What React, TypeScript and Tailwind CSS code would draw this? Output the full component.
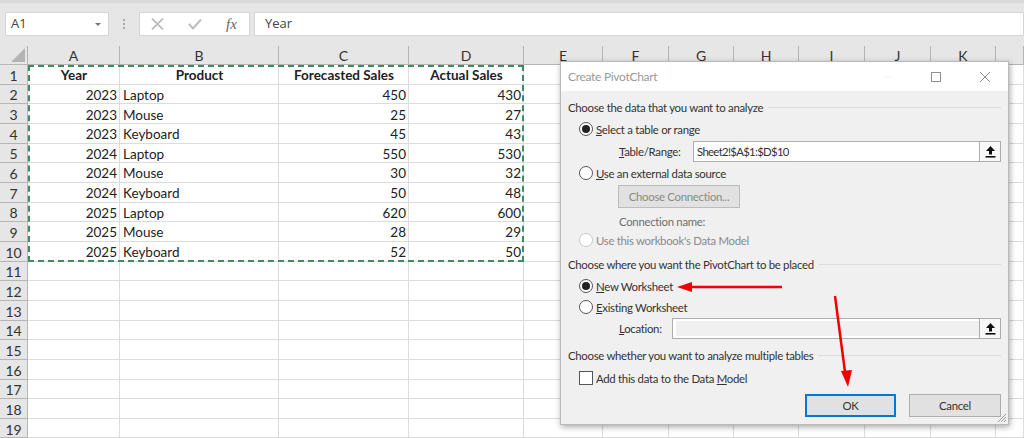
import { Minus } from 'lucide-react'

const columns = ['A', 'B', 'C', 'D', 'E', 'F', 'G', 'H', 'I', 'J', 'K', '']

const data = [
  ['2023', 'Laptop', '450', '430'],
  ['2023', 'Mouse', '25', '27'],
  ['2023', 'Keyboard', '45', '43'],
  ['2024', 'Laptop', '550', '530'],
  ['2024', 'Mouse', '30', '32'],
  ['2024', 'Keyboard', '50', '48'],
  ['2025', 'Laptop', '620', '600'],
  ['2025', 'Mouse', '28', '29'],
  ['2025', 'Keyboard', '52', '50'],
]

const headers = ['Year', 'Product', 'Forecasted Sales', 'Actual Sales']

function Cell({ text = '', align = 'left', bold = false }: { text?: string; align?: string; bold?: boolean }) {
  const alignClass = align === 'right' ? 'justify-end' : align === 'center' ? 'justify-center' : 'justify-start'
  return (
    <div className={`flex items-center overflow-visible whitespace-nowrap border-r border-b border-[#dcdcdc] bg-white pt-[2px] pr-[2px] pl-[3px] text-[13.5px] text-[#222] ${alignClass} ${bold ? 'font-bold' : ''}`}>
      {text}
    </div>
  )
}

function Sheet() {
  const rows = Array.from({ length: 19 }, (_, i) => i + 1)
  return (
    <div className="grid grid-cols-[28px_92px_159px_130px_115px_79px_66px_65px_65px_66px_66px_65px_28px] grid-rows-[19px_repeat(19,19.67px)] font-['Lato',sans-serif]">
      <div className="relative border-r border-b border-[#b5b5b5] bg-[#e6e6e6]">
        <svg className="absolute right-[2px] bottom-[2px]" width="14" height="14" viewBox="0 0 14 14">
          <polygon points="14,0 14,14 0,14" fill="#b4b4b4" />
        </svg>
      </div>
      {columns.map((c, i) => (
        <div key={i} className="flex items-center justify-center border-r border-b border-[#b5b5b5] bg-[#e6e6e6] pt-[1px] text-[14px] text-[#333]">
          {c}
        </div>
      ))}
      {rows.map((r) => (
        <div key={r} className="contents">
          <div className="flex items-center justify-center border-r border-b border-[#b5b5b5] bg-[#e6e6e6] pt-[2px] text-[14px] text-[#333]">
            {r}
          </div>
          {r === 1 && headers.map((h) => <Cell key={h} text={h} align="center" bold />)}
          {r > 1 && r <= 10 && (
            <>
              <Cell text={data[r - 2][0]} align="right" />
              <Cell text={data[r - 2][1]} />
              <Cell text={data[r - 2][2]} align="right" />
              <Cell text={data[r - 2][3]} align="right" />
            </>
          )}
          {r > 10 && [0, 1, 2, 3].map((i) => <Cell key={i} />)}
          {[0, 1, 2, 3, 4, 5, 6, 7].map((i) => <Cell key={`x${i}`} />)}
        </div>
      ))}
    </div>
  )
}

function Radio({ checked = false, disabled = false }: { checked?: boolean; disabled?: boolean }) {
  return (
    <span className={`flex h-[14px] w-[14px] shrink-0 items-center justify-center rounded-full border bg-white ${disabled ? 'border-[#c8c8c8]' : 'border-[#555]'}`}>
      {checked && <span className="h-[8px] w-[8px] rounded-full bg-[#222]" />}
    </span>
  )
}

function RadioRow({ className, checked, disabled, children }: { className: string; checked?: boolean; disabled?: boolean; children: React.ReactNode }) {
  return (
    <div className={`flex h-[18px] items-center gap-[3px] pl-[11px] ${disabled ? 'text-[#8a8a8a]' : ''} ${className}`}>
      <Radio checked={checked} disabled={disabled} />
      <span className="pt-[1px]">{children}</span>
    </div>
  )
}

function Heading({ className, children }: { className: string; children: string }) {
  return (
    <div className={`flex h-[18px] items-center gap-[5px] ${className}`}>
      <span className="whitespace-nowrap pt-[1px]">{children}</span>
      <div className="h-px flex-1 bg-[#dcdcdc]" />
    </div>
  )
}

function UploadButton() {
  return (
    <div className="flex h-full w-[21px] items-center justify-center border-l border-[#adadad] bg-[#f8f8f8]">
      <svg width="11" height="12" viewBox="0 0 11 12">
        <path d="M5.5 0 L10 5 H7 V8.5 H4 V5 H1 Z" fill="#111" />
        <rect x="0.5" y="10" width="10" height="1.6" fill="#111" />
      </svg>
    </div>
  )
}

function Dialog() {
  return (
    <div className="absolute top-[61px] left-[560px] flex h-[364px] w-[449px] flex-col border border-[#b9b9b9] bg-[#f0f0f0] font-['Lato',sans-serif] text-[11.4px] tracking-[-0.3px] text-[#333] shadow-[1px_2px_6px_rgba(0,0,0,0.35)]">
      <div className="flex h-[29px] shrink-0 items-center bg-white pl-[7px] text-[12px] text-[#9a9a9a]">
        <span className="pt-[1px]">Create PivotChart</span>
        <div className="ml-auto flex items-center">
          <Minus size={12} strokeWidth={1} className="mr-[36px] text-[#e4e4e4]" />
          <div className="mr-[39px] h-[10px] w-[10px] border border-[#8f8f8f]" />
          <svg className="mr-[18px]" width="10" height="10" viewBox="0 0 10 10">
            <path d="M0 0 L10 10 M10 0 L0 10" stroke="#8f8f8f" strokeWidth="1" />
          </svg>
        </div>
      </div>
      <div className="flex flex-1 flex-col pr-[7px] pl-[7px]">
        <Heading className="mt-[7px]">Choose the data that you want to analyze</Heading>
        <RadioRow className="mt-[4px]" checked><u>S</u>elect a table or range</RadioRow>
        <div className="mt-[3px] flex h-[21px] items-center">
          <span className="ml-[51px] w-[74px] pt-[1px]"><u>T</u>able/Range:</span>
          <div className="flex h-full flex-1 items-center border border-[#adadad] bg-white">
            <span className="flex-1 pt-[1px] pl-[3px] tracking-[-0.7px]">Sheet2!$A$1:$D$10</span>
            <UploadButton />
          </div>
        </div>
        <RadioRow className="mt-[2px]"><u>U</u>se an external data source</RadioRow>
        <div className="mt-[3px] ml-[50px] flex h-[23px] w-[122px] items-center justify-center border border-[#bcbcbc] bg-[#e1e1e1] pt-[1px] text-[#8a8a8a]">
          Choose Connection...
        </div>
        <div className="mt-[4px] ml-[51px] flex h-[18px] items-center pt-[1px] text-[#6e6e6e]">Connection name:</div>
        <RadioRow className="mt-[1px]" disabled>Use this workbook's Data Model</RadioRow>
        <Heading className="mt-[6px]">Choose where you want the PivotChart to be placed</Heading>
        <RadioRow className="mt-[4px]" checked><u>N</u>ew Worksheet</RadioRow>
        <RadioRow className="mt-[3px]"><u>E</u>xisting Worksheet</RadioRow>
        <div className="mt-[2px] flex h-[21px] items-center">
          <span className="ml-[51px] w-[53px] pt-[1px]"><u>L</u>ocation:</span>
          <div className="flex h-full flex-1 items-center border border-[#adadad] bg-white pl-[3px]">
            <div className="h-[15px] flex-1 bg-[#f0f0f0]" />
            <UploadButton />
          </div>
        </div>
        <Heading className="mt-[7px]">Choose whether you want to analyze multiple tables</Heading>
        <div className="mt-[5px] flex h-[18px] items-center gap-[3px] pl-[11px]">
          <span className="h-[14px] w-[14px] border border-[#555] bg-white" />
          <span className="pt-[1px]">Add this data to the Data <u>M</u>odel</span>
        </div>
        <div className="mt-[7px] flex h-[23px] justify-end gap-[13px]">
          <div className="flex w-[91px] items-center justify-center border-2 border-[#0078d7] bg-[#e1e1e1] pt-[1px]">OK</div>
          <div className="flex w-[92px] items-center justify-center border border-[#adadad] bg-[#e1e1e1] pt-[1px]">Cancel</div>
        </div>
      </div>
      <svg className="absolute right-[1px] bottom-[1px]" width="10" height="10" viewBox="0 0 10 10">
        <path d="M9 1 L1 9 M9 4 L4 9 M9 7 L7 9" stroke="#9a9a9a" strokeWidth="1" />
      </svg>
    </div>
  )
}

export default function App() {
  return (
    <div className="relative h-[438px] w-[1024px] overflow-hidden bg-[#e6e6e6]">
      <div className="h-[3px] bg-[#d9d9d9]" />
      <div className="flex h-[43px] items-start gap-[4px] pt-[9px] pl-[5px] font-['Open_Sans',sans-serif] text-[13px] text-[#444]">
        <div className="flex h-[24px] w-[104px] items-center justify-between border border-[#d4d4d4] bg-white pr-[7px] pl-[5px]">
          <span>A1</span>
          <span className="h-0 w-0 border-x-[3px] border-t-[3px] border-x-transparent border-t-[#777]" />
        </div>
        <div className="flex h-[24px] w-[22px] flex-col items-center justify-center gap-[2px]">
          <span className="h-[2px] w-[2px] bg-[#aaa]" />
          <span className="h-[2px] w-[2px] bg-[#aaa]" />
          <span className="h-[2px] w-[2px] bg-[#aaa]" />
        </div>
        <div className="flex h-[24px] w-[111px] items-center border border-[#d4d4d4] bg-white pl-[11px]">
          <svg width="13" height="12" viewBox="0 0 13 12">
            <path d="M1 0.5 L12 11.5 M12 0.5 L1 11.5" stroke="#bdbdbd" strokeWidth="1.8" />
          </svg>
          <svg className="ml-[24px]" width="14" height="12" viewBox="0 0 14 12">
            <path d="M1 6 L5 10.5 L13 1.5" stroke="#bdbdbd" strokeWidth="2" fill="none" />
          </svg>
          <span className="ml-[24px] font-['Liberation_Serif',serif] text-[15px] text-[#666] italic">fx</span>
        </div>
        <div className="flex h-[24px] flex-1 items-center border border-[#d4d4d4] bg-white pl-[10px]">Year</div>
      </div>
      <Sheet />
      <div className="absolute top-[65px] left-[28px] h-[197px] w-[496px] border-2 border-dashed border-[#3f8a60]" />
      <Dialog />
      <svg className="pointer-events-none absolute top-0 left-0" width="1024" height="438" viewBox="0 0 1024 438">
        <path d="M782 287 H690" stroke="#f00000" strokeWidth="2.5" fill="none" />
        <polygon points="677,287 692,282 692,292" fill="#f00000" />
        <path d="M835 296 L845 372" stroke="#f00000" strokeWidth="2.5" fill="none" />
        <polygon points="848,387 841,371 852,370" fill="#f00000" />
      </svg>
    </div>
  )
}
